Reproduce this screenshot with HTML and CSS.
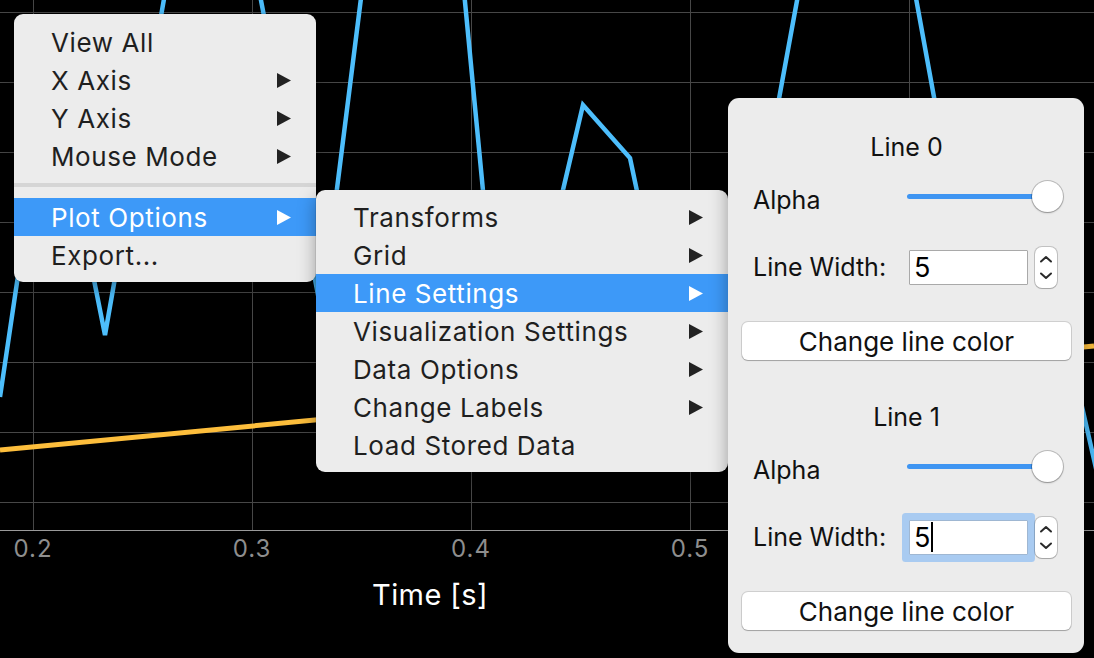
FILE: index.html
```html
<!DOCTYPE html>
<html>
<head>
<meta charset="utf-8">
<link rel="stylesheet" href="styles.css">
</head>
<body>
<div class="screen">
  <svg class="plot" width="1094" height="658" viewBox="0 0 1094 658">
    <defs>
      <clipPath id="plotclip"><rect x="0" y="0" width="1094" height="530"/></clipPath>
    </defs>
    <g class="grid">
      <line x1="33.5" y1="0" x2="33.5" y2="530"/>
      <line x1="252.5" y1="0" x2="252.5" y2="530"/>
      <line x1="471.5" y1="0" x2="471.5" y2="530"/>
      <line x1="690.5" y1="0" x2="690.5" y2="530"/>
      <line x1="909.5" y1="0" x2="909.5" y2="530"/>
      <line x1="0" y1="12.5" x2="1094" y2="12.5"/>
      <line x1="0" y1="82.5" x2="1094" y2="82.5"/>
      <line x1="0" y1="152.5" x2="1094" y2="152.5"/>
      <line x1="0" y1="222.5" x2="1094" y2="222.5"/>
      <line x1="0" y1="292.5" x2="1094" y2="292.5"/>
      <line x1="0" y1="362.5" x2="1094" y2="362.5"/>
      <line x1="0" y1="432.5" x2="1094" y2="432.5"/>
      <line x1="0" y1="502.5" x2="1094" y2="502.5"/>
    </g>
    <line class="axis" x1="0" y1="530.5" x2="1094" y2="530.5"/>
    <g clip-path="url(#plotclip)">
      <polyline class="series-blue" points="0,397 50,60 105,335 210,-263 319,300 328,260 420,-470 506,432 583,105 630,158 660,300 700,200 720,420 857,-326 960,240 1060,310 1110,530"/>
      <line class="series-orange" x1="0" y1="450" x2="1094" y2="346"/>
    </g>
    <g class="ticks">
      <text x="33" y="557">0.2</text>
      <text x="252" y="557">0.3</text>
      <text x="471" y="557">0.4</text>
      <text x="690" y="557">0.5</text>
    </g>
    <text class="axis-title" x="430" y="605">Time [s]</text>
  </svg>

  <div class="menu main-menu">
    <div class="item">View All</div>
    <div class="item">X Axis <svg class="arrow" width="14" height="15" viewBox="0 0 14 15"><polygon points="0,0 14,7.5 0,15"/></svg></div>
    <div class="item">Y Axis <svg class="arrow" width="14" height="15" viewBox="0 0 14 15"><polygon points="0,0 14,7.5 0,15"/></svg></div>
    <div class="item">Mouse Mode <svg class="arrow" width="14" height="15" viewBox="0 0 14 15"><polygon points="0,0 14,7.5 0,15"/></svg></div>
    <div class="sep"></div>
    <div class="item active">Plot Options <svg class="arrow" width="14" height="15" viewBox="0 0 14 15"><polygon points="0,0 14,7.5 0,15"/></svg></div>
    <div class="item">Export...</div>
  </div>

  <div class="menu submenu">
    <div class="item">Transforms <svg class="arrow" width="14" height="15" viewBox="0 0 14 15"><polygon points="0,0 14,7.5 0,15"/></svg></div>
    <div class="item">Grid <svg class="arrow" width="14" height="15" viewBox="0 0 14 15"><polygon points="0,0 14,7.5 0,15"/></svg></div>
    <div class="item active">Line Settings <svg class="arrow" width="14" height="15" viewBox="0 0 14 15"><polygon points="0,0 14,7.5 0,15"/></svg></div>
    <div class="item">Visualization Settings <svg class="arrow" width="14" height="15" viewBox="0 0 14 15"><polygon points="0,0 14,7.5 0,15"/></svg></div>
    <div class="item">Data Options <svg class="arrow" width="14" height="15" viewBox="0 0 14 15"><polygon points="0,0 14,7.5 0,15"/></svg></div>
    <div class="item">Change Labels <svg class="arrow" width="14" height="15" viewBox="0 0 14 15"><polygon points="0,0 14,7.5 0,15"/></svg></div>
    <div class="item">Load Stored Data</div>
  </div>

  <div class="panel">
    <section class="group">
      <div class="title">Line 0</div>
      <div class="row alpha-row">
        <span class="label">Alpha</span>
        <div class="slider"><div class="track"></div><div class="thumb"></div></div>
      </div>
      <div class="row width-row">
        <span class="label">Line Width:</span>
        <div class="field">5</div>
        <div class="stepper">
          <svg width="22" height="41" viewBox="0 0 22 41"><path d="M6 14.5 L11 10 L16 14.5"/><path d="M6 26.5 L11 31 L16 26.5"/></svg>
        </div>
      </div>
      <div class="btn">Change line color</div>
    </section>
    <section class="group">
      <div class="title">Line 1</div>
      <div class="row alpha-row">
        <span class="label">Alpha</span>
        <div class="slider"><div class="track"></div><div class="thumb"></div></div>
      </div>
      <div class="row width-row">
        <span class="label">Line Width:</span>
        <div class="field focused">5<span class="caret"></span></div>
        <div class="stepper">
          <svg width="22" height="41" viewBox="0 0 22 41"><path d="M6 14.5 L11 10 L16 14.5"/><path d="M6 26.5 L11 31 L16 26.5"/></svg>
        </div>
      </div>
      <div class="btn">Change line color</div>
    </section>
  </div>
</div>
</body>
</html>
```

FILE: styles.css
```css
* { box-sizing: border-box; }
html, body { margin: 0; padding: 0; background: #000; }
.screen {
  position: relative;
  width: 1094px;
  height: 658px;
  background: #000;
  overflow: hidden;
  font-family: Inter, "Noto Sans", "Liberation Sans", sans-serif;
}
.plot { display: block; }
.grid line { stroke: #474747; stroke-width: 1; }
.axis { stroke: #9a9a9a; stroke-width: 1; }
.series-blue { fill: none; stroke: #4dbefc; stroke-width: 4.5; stroke-linejoin: miter; }
.series-orange { stroke: #fdbe3c; stroke-width: 5; }
.ticks text {
  font-family: Inter, "Liberation Sans", sans-serif;
  font-size: 24px;
  fill: #8e8e8e;
  text-anchor: middle;
  letter-spacing: 1px;
}
.axis-title {
  font-family: Inter, "Liberation Sans", sans-serif;
  font-size: 29px;
  fill: #ffffff;
  text-anchor: middle;
  letter-spacing: 0.4px;
}

.menu {
  position: absolute;
  background: #ececec;
  border-radius: 9px;
  padding: 8px 0;
  box-shadow: 0 6px 18px rgba(0,0,0,0.35), 0 0 0 1px rgba(0,0,0,0.08);
}
.main-menu { left: 14px; top: 14px; width: 302px; padding-top: 9px; }
.submenu { left: 316px; top: 190px; width: 412px; }
.item {
  height: 38px;
  display: flex;
  align-items: center;
  justify-content: space-between;
  padding: 0 25px 0 37px;
  font-size: 26px;
  letter-spacing: 0.6px;
  color: #1f1f1f;
  white-space: nowrap;
}
.item .arrow { fill: #222; flex: none; }
.item.active { background: #3d99f8; color: #fff; }
.item.active .arrow { fill: #fff; }
.sep { height: 23px; padding-top: 8px; }
.sep::before { content: ""; display: block; height: 4px; background: #d5d5d5; }

.panel {
  position: absolute;
  left: 728px;
  top: 98px;
  width: 356px;
  height: 555px;
  background: #ececec;
  border-radius: 11px;
  padding: 34px 13px 23px 14px;
  display: flex;
  flex-direction: column;
  box-shadow: 0 6px 18px rgba(0,0,0,0.35);
  color: #111;
}
.group { display: flex; flex-direction: column; }
.group + .group { margin-top: 42px; }
.title { height: 30px; line-height: 30px; text-align: center; font-size: 25px; }
.row { display: flex; align-items: center; padding-left: 11px; font-size: 25px; }
.label { width: 156px; flex: none; }
.alpha-row { height: 36px; margin-top: 20px; }
.slider { position: relative; width: 156px; height: 32px; margin-left: -2px; margin-bottom: 6px; }
.track {
  position: absolute;
  left: 0; right: 16px; top: 13px;
  height: 5px;
  border-radius: 3px;
  background: #3f95f2;
}
.thumb {
  position: absolute;
  right: 0; top: 0;
  width: 31px; height: 31px;
  border-radius: 50%;
  background: #fff;
  box-shadow: 0 0 0 1px rgba(0,0,0,0.2), 0 1px 2px rgba(0,0,0,0.25);
}
.width-row { height: 36px; margin-top: 31px; }
.field {
  width: 119px;
  height: 35px;
  background: #fff;
  border: 1px solid #a9a9a9;
  border-radius: 1px;
  font-size: 27px;
  line-height: 33px;
  padding-left: 4px;
  color: #000;
  display: flex;
  align-items: center;
}
.field.focused { box-shadow: 0 0 0 7px #a9cbf1; border-color: #9fb7d2; }
.caret { display: inline-block; width: 2px; height: 30px; background: #000; margin-left: 1px; }
.stepper {
  margin-left: 7px;
  width: 22px;
  height: 41px;
  background: #fff;
  border-radius: 7px;
  box-shadow: 0 0 0 1px rgba(0,0,0,0.18), 0 1px 1px rgba(0,0,0,0.15);
}
.stepper svg { display: block; }
.stepper path { fill: none; stroke: #2a2a2a; stroke-width: 2; stroke-linecap: round; stroke-linejoin: round; }
.btn {
  margin-top: 37px;
  height: 38px;
  width: 329px;
  background: #fff;
  border-radius: 6px;
  box-shadow: 0 0 0 1px rgba(0,0,0,0.12), 0 1px 1px rgba(0,0,0,0.22);
  font-size: 26px;
  display: flex;
  align-items: center;
  justify-content: center;
  color: #111;
}
```
